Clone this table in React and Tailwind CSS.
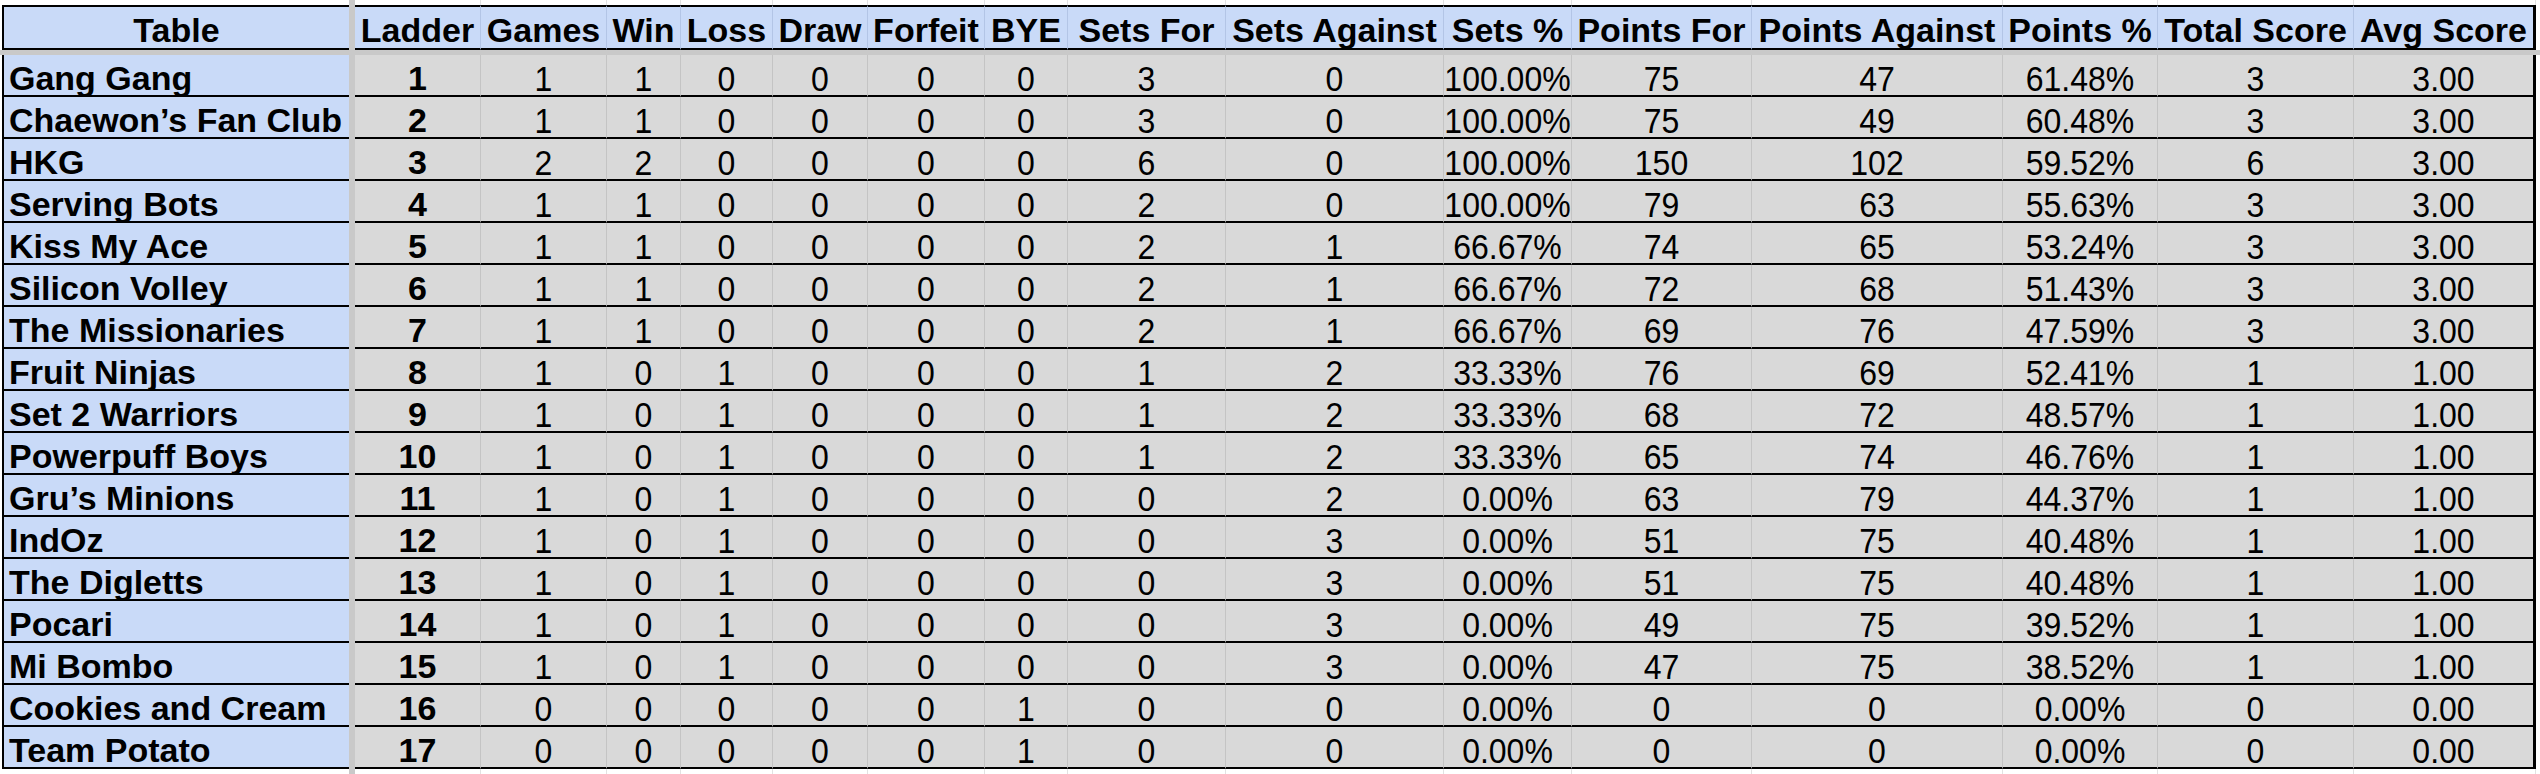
const COLS = [
  { label: 'Ladder', w: 'w-[126px]' },
  { label: 'Games', w: 'w-[126px]' },
  { label: 'Win', w: 'w-[74px]' },
  { label: 'Loss', w: 'w-[92px]' },
  { label: 'Draw', w: 'w-[95px]' },
  { label: 'Forfeit', w: 'w-[117px]' },
  { label: 'BYE', w: 'w-[83px]' },
  { label: 'Sets For', w: 'w-[158px]' },
  { label: 'Sets Against', w: 'w-[218px]' },
  { label: 'Sets %', w: 'w-[128px]' },
  { label: 'Points For', w: 'w-[180px]' },
  { label: 'Points Against', w: 'w-[251px]' },
  { label: 'Points %', w: 'w-[155px]' },
  { label: 'Total Score', w: 'w-[196px]' },
  { label: 'Avg Score', w: 'w-[182px]' },
]

const ROWS = [
  ['Gang Gang', 1, 1, 1, 0, 0, 0, 0, 3, 0, '100.00%', 75, 47, '61.48%', 3, '3.00'],
  ['Chaewon’s Fan Club', 2, 1, 1, 0, 0, 0, 0, 3, 0, '100.00%', 75, 49, '60.48%', 3, '3.00'],
  ['HKG', 3, 2, 2, 0, 0, 0, 0, 6, 0, '100.00%', 150, 102, '59.52%', 6, '3.00'],
  ['Serving Bots', 4, 1, 1, 0, 0, 0, 0, 2, 0, '100.00%', 79, 63, '55.63%', 3, '3.00'],
  ['Kiss My Ace', 5, 1, 1, 0, 0, 0, 0, 2, 1, '66.67%', 74, 65, '53.24%', 3, '3.00'],
  ['Silicon Volley', 6, 1, 1, 0, 0, 0, 0, 2, 1, '66.67%', 72, 68, '51.43%', 3, '3.00'],
  ['The Missionaries', 7, 1, 1, 0, 0, 0, 0, 2, 1, '66.67%', 69, 76, '47.59%', 3, '3.00'],
  ['Fruit Ninjas', 8, 1, 0, 1, 0, 0, 0, 1, 2, '33.33%', 76, 69, '52.41%', 1, '1.00'],
  ['Set 2 Warriors', 9, 1, 0, 1, 0, 0, 0, 1, 2, '33.33%', 68, 72, '48.57%', 1, '1.00'],
  ['Powerpuff Boys', 10, 1, 0, 1, 0, 0, 0, 1, 2, '33.33%', 65, 74, '46.76%', 1, '1.00'],
  ['Gru’s Minions', 11, 1, 0, 1, 0, 0, 0, 0, 2, '0.00%', 63, 79, '44.37%', 1, '1.00'],
  ['IndOz', 12, 1, 0, 1, 0, 0, 0, 0, 3, '0.00%', 51, 75, '40.48%', 1, '1.00'],
  ['The Digletts', 13, 1, 0, 1, 0, 0, 0, 0, 3, '0.00%', 51, 75, '40.48%', 1, '1.00'],
  ['Pocari', 14, 1, 0, 1, 0, 0, 0, 0, 3, '0.00%', 49, 75, '39.52%', 1, '1.00'],
  ['Mi Bombo', 15, 1, 0, 1, 0, 0, 0, 0, 3, '0.00%', 47, 75, '38.52%', 1, '1.00'],
  ['Cookies and Cream', 16, 0, 0, 0, 0, 0, 1, 0, 0, '0.00%', 0, 0, '0.00%', 0, '0.00'],
  ['Team Potato', 17, 0, 0, 0, 0, 0, 1, 0, 0, '0.00%', 0, 0, '0.00%', 0, '0.00'],
]

// blank spreadsheet strip above / below the table
function GridStrip({ h }) {
  return (
    <div className={`flex ${h}`}>
      <div className="w-[2px] shrink-0 bg-white" />
      <div className="w-[347px] shrink-0 bg-white" />
      <div className="w-[6px] shrink-0 bg-[#c9c9c9]" />
      {COLS.map((c) => (
        <div key={c.label} className={`${c.w} shrink-0 bg-white border-r border-[#e2e2e2]`} />
      ))}
      <div className="flex-1 bg-white" />
    </div>
  )
}

function HeaderRow() {
  return (
    <div className="flex h-[45px]">
      <div className="w-[2px] shrink-0 bg-white" />
      <div className="w-[347px] shrink-0 bg-[#c9daf8] border-l-2 border-y-2 border-black text-center font-bold text-[34px] leading-[46px]">
        Table
      </div>
      <div className="w-[6px] shrink-0 bg-[#c9c9c9]" />
      {COLS.map((c, i) => (
        <div
          key={c.label}
          className={`${c.w} shrink-0 bg-[#c9daf8] border-y-2 border-black text-center font-bold text-[34px] leading-[46px] whitespace-nowrap overflow-hidden ${
            i === COLS.length - 1 ? 'border-r-[3px] border-r-black' : 'border-r border-r-[#b3c5e6]'
          }`}
        >
          {c.label}
        </div>
      ))}
      <div className="flex-1 bg-white" />
    </div>
  )
}

function DataRow({ row }) {
  const [name, ...vals] = row
  return (
    <div className="flex h-[42px]">
      <div className="w-[2px] shrink-0 bg-white" />
      <div className="w-[347px] shrink-0 bg-[#c9daf8] border-l-2 border-b-2 border-black pl-[5px] font-bold text-[34px] leading-[46px] whitespace-nowrap">
        {name}
      </div>
      <div className="w-[6px] shrink-0 bg-[#c9c9c9]" />
      {COLS.map((c, i) => (
        <div
          key={c.label}
          className={`${c.w} shrink-0 bg-[#d9d9d9] border-b-2 border-b-black text-center whitespace-nowrap overflow-hidden ${
            i === 0 ? 'font-bold text-[34px] leading-[46px]' : 'text-[32px] leading-[48px]'
          } ${i === COLS.length - 1 ? 'border-r-[3px] border-r-black' : 'border-r border-r-[#c4c4c4]'}`}
        >
          <span className={i === 0 ? '' : 'inline-block scale-y-[1.08] origin-center'}>{vals[i]}</span>
        </div>
      ))}
      <div className="flex-1 bg-white" />
    </div>
  )
}

export default function App() {
  return (
    <div className="w-[2540px] h-[774px] overflow-hidden bg-white text-black font-['Liberation_Sans',Arial,sans-serif]">
      <GridStrip h="h-[5px]" />
      <HeaderRow />
      <div className="h-[5px] bg-[#c9c9c9]" />
      {ROWS.map((r) => (
        <DataRow key={r[0]} row={r} />
      ))}
      <GridStrip h="h-[5px]" />
    </div>
  )
}
